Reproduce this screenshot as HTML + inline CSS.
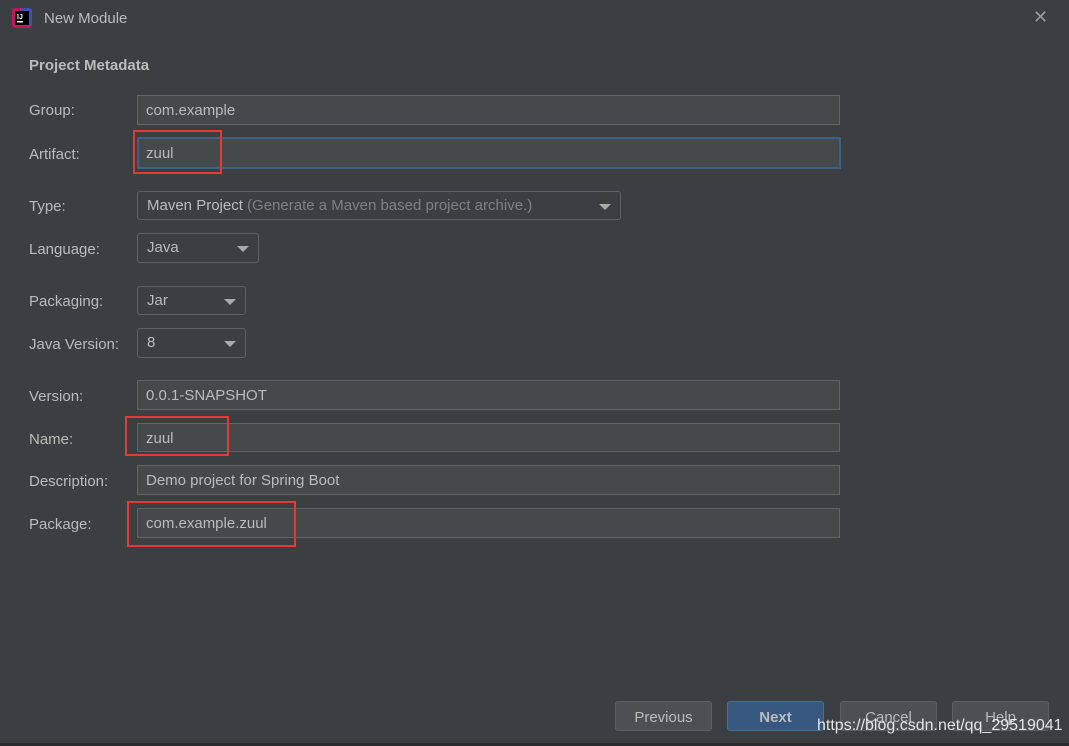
<!DOCTYPE html>
<html><head><style>
body{margin:0;width:1069px;height:746px;background:#3c3f41;font-family:"Liberation Sans","Noto Sans CJK SC",sans-serif;color:#bbbbbb;position:relative;overflow:hidden;font-size:15px}
.a{position:absolute}
.lbl{position:absolute;left:29px;font-size:15px;color:#bbbbbb;margin-top:2px}
.f{position:absolute;left:137px;background:#45494a;border:1px solid #646464;box-sizing:border-box;padding-left:8px;font-size:15px;color:#bbbbbb;line-height:29px}
.c{position:absolute;left:137px;background:#3c3f41;border:1px solid #5e6060;border-radius:3px;box-sizing:border-box;padding-left:9px;font-size:15px;line-height:28px;color:#bbbbbb}
.c:after{content:"";position:absolute;right:9px;top:12px;border-left:6px solid transparent;border-right:6px solid transparent;border-top:6px solid #aaaaaa}
.r{position:absolute;border:2px solid #e53935;box-sizing:border-box}
.b{position:absolute;top:701px;width:97px;height:30px;border:1px solid #5e6060;border-radius:3px;background:#4c5052;box-sizing:border-box;text-align:center;line-height:31px;font-size:15px;color:#bbbbbb}
</style></head><body>
<svg class="a" style="left:12px;top:8px" width="20" height="20" viewBox="0 0 20 20"><rect x="0" y="0" width="20" height="20" rx="3" fill="#c2185b"/><rect x="8" y="0" width="12" height="18" rx="3" fill="#3f51b5"/><rect x="3" y="3" width="14" height="14" fill="#000"/><text x="5" y="11" font-size="7" fill="#fff" font-family="Liberation Sans" font-weight="bold">IJ</text><rect x="5" y="13" width="6" height="1.5" fill="#fff"/></svg>
<div class="a" style="left:44px;top:10px;font-size:15px;color:#bbbbbb">New Module</div>
<div class="a" style="left:1033px;top:7px;font-size:18px;color:#999">✕</div>
<div class="a" style="left:29px;top:57px;font-weight:bold;font-size:15px;color:#bbbbbb">Project Metadata</div>

<div class="lbl" style="top:100px">Group:</div>
<div class="f" style="top:95px;width:703px;height:30px">com.example</div>
<div class="lbl" style="top:144px">Artifact:</div>
<div class="f" style="top:137px;width:704px;height:32px;border:2px solid #3d6185;padding-left:7px;line-height:29px">zuul</div>
<div class="r" style="left:133px;top:130px;width:89px;height:44px"></div>

<div class="lbl" style="top:196px">Type:</div>
<div class="c" style="top:191px;width:484px;height:29px">Maven Project <span style="color:#808080">(Generate a Maven based project archive.)</span></div>
<div class="lbl" style="top:239px">Language:</div>
<div class="c" style="top:233px;width:122px;height:30px">Java</div>
<div class="lbl" style="top:291px">Packaging:</div>
<div class="c" style="top:286px;width:109px;height:29px">Jar</div>
<div class="lbl" style="top:334px">Java Version:</div>
<div class="c" style="top:328px;width:109px;height:30px">8</div>

<div class="lbl" style="top:386px">Version:</div>
<div class="f" style="top:380px;width:703px;height:30px">0.0.1-SNAPSHOT</div>
<div class="lbl" style="top:429px">Name:</div>
<div class="f" style="top:423px;width:703px;height:29px">zuul</div>
<div class="r" style="left:125px;top:416px;width:104px;height:40px"></div>
<div class="lbl" style="top:471px">Description:</div>
<div class="f" style="top:465px;width:703px;height:30px">Demo project for Spring Boot</div>
<div class="lbl" style="top:514px">Package:</div>
<div class="f" style="top:508px;width:703px;height:30px">com.example.zuul</div>
<div class="r" style="left:127px;top:501px;width:169px;height:46px"></div>

<div class="b" style="left:615px">Previous</div>
<div class="b" style="left:727px;background:#365880;border-color:#4c708c;font-weight:bold;color:#bbbbbb">Next</div>
<div class="b" style="left:840px">Cancel</div>
<div class="b" style="left:952px">Help</div>
<div class="a" style="left:817px;top:717px;font-size:16px;color:#ffffff;opacity:.85">https://blog.csdn.net/qq_29519041</div>
<div class="a" style="left:0;top:743px;width:1069px;height:3px;background:#2b2b2b"></div>
</body></html>
